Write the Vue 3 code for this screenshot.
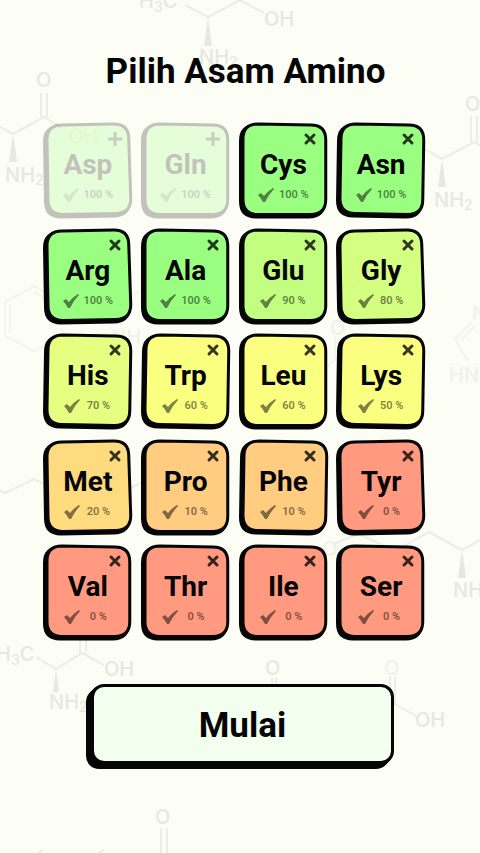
<template>
  <main class="page">
    <svg class="molecules" viewBox="0 0 480 853" preserveAspectRatio="xMidYMin slice" aria-hidden="true">
      <g class="lines">
        <!-- top -->
        <path d="M185 5 L208 17 L240 0 L264 13" />
        <!-- left of first row -->
        <path d="M0 127 L13 134 L44 117 L62 128 M41 93 V117 M47 93 V117" />
        <!-- right of first row -->
        <path d="M425 149 L442 159 L474 142 L480 145 M471 116 V142 M477 116 V142" />
        <!-- rings -->
        <path class="faint" d="M34 286 L61 302 M34 286 L5 302 V336 L34 351 L61 336 M10 305 V333 M34 292 L56 304 M61 328 L66 338" />
        <path class="faint" d="M472 322 L455 339 L468 361 M476 325 L461 340" />
        <path class="faint" d="M335 336 V358 L326 370 M130 298 L141 291" />
        <!-- chains -->
        <path d="M0 490 L5 493 L34 479 L50 487 M130 488 L141 483" />
        <path d="M334 544 L358 534 L385 546 M402 547 L429 532 L462 550 L480 540" />
        <!-- lower left -->
        <path d="M36 657 L56 669 L82 653 L104 665 M80 640 V653 M86 640 V653" />
        <!-- behind the button and below it -->
        <path d="M272 678 V686 M276 678 V686 M390 676 V704 M395 676 V704 L416 716" />
        <path d="M161 828 V853 M167 828 V853 M38 853 L43 850 M98 853 L104 850" />
      </g>
      <g class="wedges">
        <path d="M208 17 L212 46 H204 Z" />
        <path d="M13 134 L17 162 H9 Z" />
        <path d="M442 159 L446 187 H438 Z" />
        <path d="M462 550 L466 578 H458 Z" />
        <path d="M56 669 L59 692 H53 Z" />
      </g>
      <g class="labels">
        <text x="139" y="8">H<tspan dy="4" class="sub">3</tspan><tspan dy="-4">C</tspan></text>
        <text x="264" y="26">OH</text>
        <text x="199" y="64">NH<tspan dy="3" class="sub">2</tspan></text>
        <text x="36" y="87">O</text>
        <text x="68" y="143" class="ghost">OH</text>
        <text x="5" y="182">NH<tspan dy="3" class="sub">2</tspan></text>
        <text x="465" y="111">O</text>
        <text x="434" y="207">NH<tspan dy="3" class="sub">2</tspan></text>
        <text x="111" y="344" class="faint">NH</text>
        <text x="449" y="382" class="faint">HN</text>
        <text x="472" y="320" class="faint">N</text>
        <text x="330" y="335" class="faint">O</text>
        <text x="322" y="556" class="faint">O</text>
        <text x="453" y="597">NH</text>
        <text x="-4" y="661">H<tspan dy="4" class="sub">3</tspan><tspan dy="-4">C</tspan></text>
        <text x="104" y="676">OH</text>
        <text x="49" y="709">NH<tspan dy="3" class="sub">2</tspan></text>
        <text x="265" y="675">O</text>
        <text x="384" y="675" class="faint">O</text>
        <text x="415" y="727">OH</text>
        <text x="155" y="824">O</text>
      </g>
    </svg>

    <h1 class="title">Pilih Asam Amino</h1>

    <div class="grid">
      <button
        v-for="acid in acids"
        :key="acid.name"
        type="button"
        class="tile"
        :class="[acid.tone, { off: !acid.selected }]"
        :aria-pressed="acid.selected"
        @click="acid.selected = !acid.selected"
      >
        <svg class="frame" viewBox="0 0 86 94" preserveAspectRatio="none" aria-hidden="true">
          <path class="depth" :d="frames[acid.frame]" />
          <path class="face" :d="frames[acid.frame]" />
        </svg>
        <svg class="mark" viewBox="0 0 14 14" aria-hidden="true">
          <path v-if="acid.selected" d="M3 3 L11 11 M11 3 L3 11" />
          <path v-else class="plus" d="M7 0 V14 M0 7 H14" />
        </svg>
        <span class="name">{{ acid.name }}</span>
        <span class="score">
          <svg class="check" viewBox="0 0 16 14" aria-hidden="true">
            <path d="M0 7 L3 5 L6 8 Q10 3 15 0 L16 1 Q11 6 7 14 H5 Q3 10 0 7 Z" />
          </svg>
          <span class="percent">{{ acid.score }} %</span>
        </span>
      </button>
    </div>

    <button type="button" class="start">Mulai</button>
  </main>
</template>

<script setup>
import { ref } from 'vue';

// Rounded four-sided outline, corners clockwise from top left
const outline = ([ax, ay], [bx, by], [cx, cy], [dx, dy], r = 15) =>
  `M${ax + r} ${ay} L${bx - r} ${by} Q${bx} ${by} ${bx} ${by + r} ` +
  `L${cx} ${cy - r} Q${cx} ${cy} ${cx - r} ${cy} ` +
  `L${dx + r} ${dy} Q${dx} ${dy} ${dx} ${dy - r} ` +
  `L${ax} ${ay + r} Q${ax} ${ay} ${ax + r} ${ay} Z`;

const frames = {
  even: outline([1, 1], [84, 2], [84, 92], [1, 92]),
  left: outline([1, 2], [83, 1], [85, 91], [2, 92]),
  right: outline([2, 1], [85, 2], [84, 92], [1, 91])
};

const acids = ref([
  { name: 'Asp', score: 100, tone: 'green', frame: 'left', selected: false },
  { name: 'Gln', score: 100, tone: 'green', frame: 'even', selected: false },
  { name: 'Cys', score: 100, tone: 'green', frame: 'even', selected: true },
  { name: 'Asn', score: 100, tone: 'green', frame: 'right', selected: true },
  { name: 'Arg', score: 100, tone: 'green', frame: 'left', selected: true },
  { name: 'Ala', score: 100, tone: 'green', frame: 'even', selected: true },
  { name: 'Glu', score: 90, tone: 'lime', frame: 'even', selected: true },
  { name: 'Gly', score: 80, tone: 'pear', frame: 'left', selected: true },
  { name: 'His', score: 70, tone: 'lemon', frame: 'right', selected: true },
  { name: 'Trp', score: 60, tone: 'yellow', frame: 'right', selected: true },
  { name: 'Leu', score: 60, tone: 'yellow', frame: 'even', selected: true },
  { name: 'Lys', score: 50, tone: 'yellow', frame: 'right', selected: true },
  { name: 'Met', score: 20, tone: 'amber', frame: 'left', selected: true },
  { name: 'Pro', score: 10, tone: 'orange', frame: 'even', selected: true },
  { name: 'Phe', score: 10, tone: 'orange', frame: 'right', selected: true },
  { name: 'Tyr', score: 0, tone: 'red', frame: 'left', selected: true },
  { name: 'Val', score: 0, tone: 'red', frame: 'even', selected: true },
  { name: 'Thr', score: 0, tone: 'red', frame: 'even', selected: true },
  { name: 'Ile', score: 0, tone: 'red', frame: 'even', selected: true },
  { name: 'Ser', score: 0, tone: 'red', frame: 'even', selected: true }
]);
</script>

<style>
body {
  margin: 0;
  background: #fcfdf4;
}
</style>

<style scoped>
.page {
  position: relative;
  box-sizing: border-box;
  min-height: 100vh;
  padding: 48px 55px 48px 46px;
  display: flex;
  flex-direction: column;
  overflow: hidden;
  font-family: Roboto, "Liberation Sans", sans-serif;
  color: #050505;
}

.molecules {
  position: absolute;
  inset: 0;
  width: 100%;
  height: 100%;
}

.lines {
  fill: none;
  stroke: #ecede5;
  stroke-width: 2;
}

.wedges {
  fill: #e7e8e0;
}

.labels {
  fill: #e7e8e0;
  font-family: Inter, "Liberation Sans", sans-serif;
  font-size: 20px;
  font-weight: 500;
}

.sub {
  font-size: 14px;
}

.faint {
  opacity: 0.5;
}

.ghost {
  opacity: 0.2;
}

.title {
  position: relative;
  margin: 0 0 27px;
  padding-left: 20px;
  text-align: center;
  font-size: 35px;
  line-height: 48px;
  font-weight: 700;
  white-space: nowrap;
}

.grid {
  position: relative;
  display: grid;
  grid-template-columns: repeat(4, minmax(0, 1fr));
  gap: 12px;
}

.tile {
  position: relative;
  aspect-ratio: 11 / 12;
  min-width: 0;
  padding: 24px 2px 0 0;
  border: 0;
  background: none;
  display: flex;
  flex-direction: column;
  align-items: center;
  justify-content: flex-start;
  gap: 5px;
  font-family: inherit;
  color: inherit;
  cursor: pointer;
}

.off {
  opacity: 0.23;
}

.green { --tone: #9aff80; }
.lime { --tone: #c2ff80; }
.pear { --tone: #d4ff80; }
.lemon { --tone: #e6ff80; }
.yellow { --tone: #fbff80; }
.amber { --tone: #ffdb80; }
.orange { --tone: #ffcc80; }
.red { --tone: #ff9980; }

.frame {
  position: absolute;
  inset: 0;
  width: 100%;
  height: 100%;
  overflow: visible;
  stroke: #050505;
  stroke-width: 3;
}

.depth {
  fill: #050505;
  stroke-width: 4;
  transform: translate(-2px, 2px);
}

.face {
  fill: var(--tone);
}

.mark {
  position: absolute;
  top: 9px;
  right: 10px;
  width: 14px;
  height: 14px;
  overflow: visible;
  fill: none;
  stroke: #050505;
  stroke-width: 3;
  stroke-linecap: round;
  opacity: 0.8;
}

.plus {
  stroke-linecap: butt;
}

.name {
  position: relative;
  font-size: 28px;
  line-height: 36px;
  font-weight: 700;
}

.score {
  position: relative;
  display: flex;
  align-items: center;
  gap: 5px;
  font-size: 11px;
  line-height: 14px;
  font-weight: 600;
  opacity: 0.5;
}

.off .score {
  opacity: 0.8;
}

.off .check {
  opacity: 0.5;
}

.percent {
  min-width: 26px;
  text-align: center;
}

.check {
  width: 16px;
  height: 14px;
  fill: currentColor;
}

.start {
  position: relative;
  width: 80%;
  height: 80px;
  margin: 45px 31px 0 auto;
  padding: 4px 0 0;
  border: 3px solid #050505;
  border-radius: 13px;
  background: #f3ffee;
  box-shadow: -1px 1px 0 #050505, -2px 2px 0 #050505, -3px 3px 0 #050505, -4px 4px 0 #050505, -5px 5px 0 #050505;
  font-family: inherit;
  font-size: 35px;
  line-height: 48px;
  font-weight: 700;
  color: inherit;
  cursor: pointer;
}
</style>
